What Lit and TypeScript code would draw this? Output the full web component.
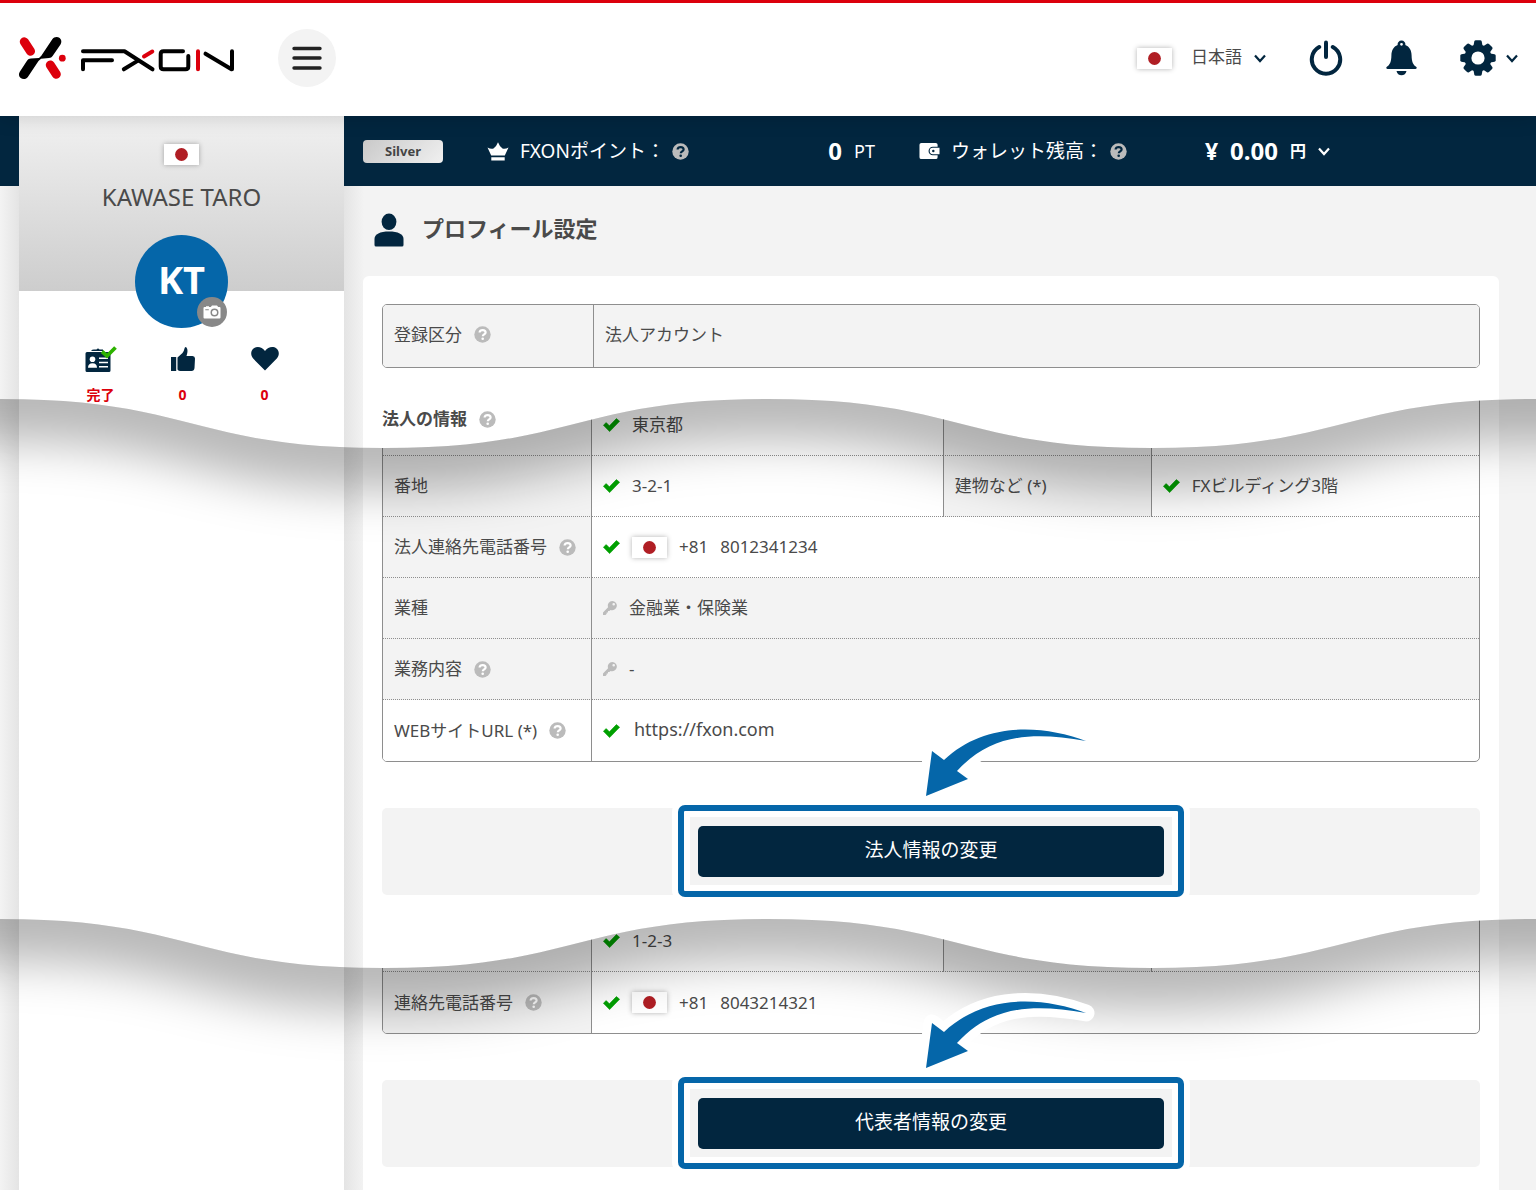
import { LitElement, html, css, svg, unsafeCSS, nothing } from "lit";
import type { TemplateResult } from "lit";
import { customElement } from "lit/decorators.js";
import { classMap } from "lit/directives/class-map.js";

/* Height of the torn edge between two sheets. */
const TEAR = 49;

/* Points of the torn edge: two full swings over the sheet's width. */
function tearPolygon(): string {
  const points: string[] = [];
  const steps = 24;
  for (let swing = 0; swing < 4; swing++) {
    for (let i = 0; i < steps; i++) {
      const t = i / steps;
      const u = 1 - t;
      const x = 1.5 * u * u * t + 1.5 * u * t * t + t * t * t;
      const rise = 3 * u * t * t + t * t * t;
      const y = swing % 2 === 0 ? rise : 1 - rise;
      points.push(`${((swing + x) * 25).toFixed(2)}% ${(y * TEAR).toFixed(1)}px`);
    }
  }
  points.push("100% 0px", "100% 100%", "0% 100%");
  return `polygon(${points.join(",")})`;
}

interface Field {
  label: string;
  value: TemplateResult;
  help?: boolean;
  locked?: boolean;
  plain?: boolean;
  mark?: "check" | "key";
}

const helpIcon = html`<svg class="help" viewBox="0 0 17 17" width="17" height="17" aria-hidden="true">
  <circle cx="8.5" cy="8.5" r="8.2" fill="currentColor" />
  <path d="M5.600 6.600C5.600 4.900 6.900 4.100 8.600 4.100s3 .9 3 2.400c0 1.900-2.800 2-2.800 3.800" fill="none" stroke="var(--help-ink, #fff)" stroke-width="2.200" />
  <circle cx="8.700" cy="12.700" r="1.300" fill="var(--help-ink, #fff)" />
</svg>`;

const checkIcon = html`<svg class="mark" viewBox="0 0 17 14" width="17" height="14" aria-hidden="true">
  <path d="M0.4 7.2 3.2 4.6 6.4 7.8 13.4 0.6 16.6 3.2 6.6 13.6Z" fill="#00a000" stroke="#00a000" stroke-width="0.6" stroke-linejoin="round" />
</svg>`;

const keyIcon = html`<svg class="mark" viewBox="0 0 14 14" width="14" height="14" aria-hidden="true">
  <path fill-rule="evenodd" d="M9.3 0a4.6 4.6 0 1 1-1.7 8.9L6.4 10.100H5v1.300H3.700v1.300L2.500 13.900H0v-2.500L5.100 6.200A4.600 4.600 0 0 1 9.300 0ZM10.700 2a1.300 1.300 0 1 0 0 2.600 1.300 1.300 0 0 0 0-2.600Z" fill="#bbb" />
</svg>`;

const chevron = html`<svg class="chevron" viewBox="0 0 12 9" width="12" height="9" aria-hidden="true">
  <path d="M1 1.500 6 7 11 1.500" fill="none" stroke="currentColor" stroke-width="2.200" />
</svg>`;

const flag = html`<svg class="flag" viewBox="0 0 35 21" width="35" height="21" role="img" aria-label="日本">
  <rect width="35" height="21" fill="#fff" />
  <circle cx="17.500" cy="10.500" r="6.400" fill="#b01e24" />
</svg>`;

const logo = html`<svg viewBox="18 36 219 44" width="219" height="44" aria-hidden="true">
  <g fill="none" stroke="#dc000c" stroke-linecap="round" stroke-width="9">
    <path d="M24.300 41.800 30.500 51.300" />
    <path d="M50.300 65 56.300 74.300" />
  </g>
  <circle cx="62.300" cy="58.200" r="3.400" fill="#dc000c" />
  <path d="M52.300 39.200C54 36.600 57.500 36.200 59.700 38c2 1.600 2.100 4.400.8 6.400L52.600 56c-.8 1.300-2 1.900-3.600 2L41 58.700 38.500 61 28 76.800c-1.700 2.500-5 3-7.300 1.200-2-1.600-2.300-4.200-.9-6.300L27 60.800c1-1.500 2.300-2.300 4-2.300l8-.6 2.300-2.100Z" fill="#000" />
  <g fill="none" stroke="#000" stroke-width="4" stroke-linecap="round" stroke-linejoin="round">
    <path d="M83 51.300H124.500L152.500 69.300" />
    <path d="M83 69.300V60.300H112" />
    <path d="M123.800 69.300 138 60.600" />
    <path d="M183 51.300H163.500Q160.700 51.300 160.700 54V66.500Q160.700 69.300 163.500 69.300H185.500Q188.300 69.300 188.300 66.500V56" />
    <path d="M205.500 53.700 231.500 69.300H232V51.300" />
  </g>
  <path d="M144 56.500 152.300 51.500M198 51.300V69.300" stroke="#dc000c" stroke-width="4" stroke-linecap="round" />
</svg>`;

function gear() {
  const teeth = Array.from({ length: 8 }, (_, i) => i * 45);
  return html`<svg viewBox="0 0 36 36" width="36" height="36" aria-hidden="true">
    <defs>
      <mask id="gear-hole">
        <rect width="36" height="36" fill="#fff" />
        <circle cx="18" cy="18" r="6.600" fill="#000" />
      </mask>
    </defs>
    <g fill="currentColor" mask="url(#gear-hole)">
      <circle cx="18" cy="18" r="13.600" />
      ${teeth.map(
        (a) => svg`<path d="M13.200 7 14.300 1.500Q14.600.3 15.800.3H20.200Q21.400.3 21.700 1.500L22.800 7Z" transform="rotate(${a} 18 18)" />`
      )}
    </g>
  </svg>`;
}

function arrow() {
  const d = "M171 26C128 10 70 6 29 45L17 36 11 81 53 64 42 56C75 20 115 16 171 26Z";
  return html`<svg class="arrow" viewBox="0 0 184 92" width="184" height="92" aria-hidden="true">
    <path d=${d} fill="#fff" stroke="#fff" stroke-width="17" stroke-linejoin="round" />
    <path d=${d} fill="#0566a9" />
  </svg>`;
}

const tearShadow = html`<svg class="tear-shadow" viewBox="0 0 1536 49" preserveAspectRatio="none" aria-hidden="true">
  <path d="M-384-150V49C-192 49-192 0 0 0S192 49 384 49 576 0 768 0 960 49 1152 49 1344 0 1536 0 1728 49 1920 49V-150Z" />
</svg>`;

@customElement("app-root")
export class AppRoot extends LitElement {
  static styles = css`
    :host {
      --navy: #02263f;
      --blue: #0566a9;
      --grey: #f3f3f3;
      --line: #8e8e8e;
      --red: #dc000c;
      display: block;
      background: #fff;
      color: #4a4a4a;
      font: 17px/24px "Noto Sans", "Noto Sans CJK JP", sans-serif;
    }
    * { box-sizing: border-box; }
    svg { display: block; flex: none; }
    button, select {
      font: inherit;
      color: inherit;
      background: none;
      border: 0;
      padding: 0;
      margin: 0;
      cursor: pointer;
    }

    .header {
      position: relative;
      z-index: 2;
      display: flex;
      align-items: center;
      height: 116px;
      padding: 0 18px 3px;
      border-top: 3px solid var(--red);
      background: #fff;
      box-shadow: 0 0 20px rgba(0, 0, 0, 0.18);
    }
    .menu {
      display: grid;
      place-items: center;
      width: 58px;
      height: 58px;
      margin-left: 41px;
      border-radius: 50%;
      background: var(--grey);
    }
    .tools {
      display: flex;
      align-items: center;
      gap: 43px;
      margin-left: auto;
      color: var(--navy);
    }
    .language, .settings { display: flex; align-items: center; }
    .language { gap: 12px; }
    .language .flag { margin-right: 7px; }
    .language select { appearance: none; color: #4a4a4a; padding-bottom: 2px; }
    .settings { gap: 10px; }
    .flag { box-shadow: 0 0 5px rgba(0, 0, 0, 0.3); }

    .sheet {
      position: relative;
      overflow: hidden;
      display: grid;
      grid-template-columns: 19px 325px 19px minmax(0, 1fr) 37px;
      background:
        linear-gradient(90deg, #f3f3f3, #e4e4e4) 0 0 / 19px 100% no-repeat,
        linear-gradient(90deg, #e4e4e4, #f3f3f3) 344px 0 / 20px 100% no-repeat,
        var(--grey);
    }
    .sheet.first { grid-template-rows: 70px auto; overflow: visible; }
    .sheet.torn {
      margin-top: -49px;
      clip-path: ${unsafeCSS(tearPolygon())};
    }
    .tear-shadow {
      position: absolute;
      left: 0;
      top: 42px;
      width: 100%;
      height: 49px;
      overflow: visible;
      pointer-events: none;
      fill: rgba(0, 0, 0, 0.28);
      filter: blur(24px);
    }

    .band {
      grid-area: 1 / 1 / 2 / -1;
      display: flex;
      align-items: center;
      gap: 44px;
      padding-left: 363px;
      background: var(--navy);
      color: #fff;
      font-size: 19px;
      --help-ink: var(--navy);
    }
    .rank {
      width: 80px;
      height: 23px;
      border-radius: 4px;
      background: linear-gradient(135deg, #c9c9c9, #f0f0f0);
      color: #444;
      font-size: 13px;
      font-weight: 700;
      line-height: 23px;
      text-align: center;
    }
    .meter, .caption, .amount { display: flex; align-items: center; }
    .meter { justify-content: space-between; }
    .points { width: 388px; }
    .wallet { width: 411px; }
    .caption .icon { margin-right: 11px; }
    .caption .help { margin-left: 7px; }
    .amount { gap: 12px; }
    .amount b { font-size: 24px; }
    .amount .yen { font-size: 23px; }
    .amount .unit { font-size: 18px; }
    .currency { display: flex; align-items: center; gap: 12px; font-size: 16px; font-weight: 700; }
    .help { color: #bbb; }

    .side { grid-column: 2; background: #fff; }
    .first .side { grid-row: 1 / 3; }
    .profile {
      display: flex;
      flex-direction: column;
      align-items: center;
      padding-top: 28px;
      background: linear-gradient(#f1f1f1, #cdcdcd);
    }
    .name { margin: 17px 0 23px; font-size: 24px; line-height: 30px; font-weight: 400; }
    .avatar {
      position: relative;
      width: 93px;
      height: 93px;
      margin-bottom: -37px;
      border-radius: 50%;
      background: var(--blue);
      color: #fff;
      font-family: "Open Sans", "Noto Sans", sans-serif;
      font-size: 38px;
      font-weight: 700;
      line-height: 88px;
      text-align: center;
    }
    .camera {
      position: absolute;
      right: 1px;
      bottom: 1px;
      display: grid;
      place-items: center;
      width: 30px;
      height: 30px;
      border-radius: 50%;
      background: #888;
    }
    .stats {
      display: grid;
      grid-template-columns: repeat(3, 82px);
      justify-content: center;
      margin: 0;
      padding: 54px 0 0 2px;
      list-style: none;
    }
    .stats li {
      display: flex;
      flex-direction: column;
      align-items: center;
      gap: 12px;
      color: var(--red);
      font-size: 14px;
      font-weight: 700;
      line-height: 20px;
    }

    .main { grid-column: 4; }
    .title {
      display: flex;
      align-items: center;
      gap: 18px;
      height: 90px;
      margin: 0;
      padding: 0 0 6px 11px;
      font-size: 22px;
      line-height: 32px;
    }
    .title svg { margin-top: 4px; }
    .panel { padding: 0 19px; background: #fff; }
    .first .panel { padding-top: 28px; border-radius: 6px 6px 0 0; }
    .second .panel { margin-top: -5px; padding-bottom: 73px; }
    .third .panel { margin-top: -9px; padding-bottom: 24px; }
    .subtitle {
      display: flex;
      align-items: center;
      gap: 12px;
      margin: 39px 0 0;
      padding-bottom: 17px;
      font-size: 17px;
      line-height: 24px;
    }

    .fields {
      width: 100%;
      table-layout: fixed;
      border: 1px solid var(--line);
      border-radius: 5px;
      border-spacing: 0;
      border-collapse: separate;
      overflow: hidden;
    }
    .fields .c-label { width: 209px; }
    .fields .c-value { width: 32%; }
    .first .fields .c-label { width: 211px; }
    .fields th, .fields td {
      height: 61px;
      padding: 0 11px;
      text-align: left;
      font-weight: 400;
      vertical-align: middle;
    }
    .fields th { background: var(--grey); border-right: 1px solid var(--line); }
    .fields td + th { border-left: 1px solid var(--line); }
    .fields tr:not(:last-child) > * { border-bottom: 1px dotted var(--line); }
    .fields .locked { background: var(--grey); }
    .fields .plain { background: #fff; }
    .first .fields th, .first .fields td { height: 62px; padding-bottom: 3px; }
    .cell { display: flex; align-items: center; gap: 12px; }
    .phone { display: flex; align-items: center; gap: 12px; }
    .url { padding: 0 0 4px 2px; font-size: 18px; }

    .action {
      position: relative;
      display: flex;
      justify-content: center;
      margin-top: 46px;
      padding: 18px;
      border-radius: 5px;
      background: var(--grey);
    }
    .highlight { position: relative; width: min(466px, 100%); }
    .highlight::before {
      content: "";
      position: absolute;
      inset: -21px -20px -20px;
      border: 6px solid var(--blue);
      border-radius: 7px;
      box-shadow: 0 0 0 6px #fff, inset 0 0 0 6px #fff;
    }
    .submit {
      position: relative;
      width: 100%;
      height: 51px;
      padding-bottom: 4px;
      border-radius: 5px;
      background: var(--navy);
      color: #fff;
      font-size: 19px;
    }
    .arrow { position: absolute; top: -93px; left: calc(50% - 16px); }
    .overlay { position: relative; z-index: 1; }
  `;

  private label(f: Field) {
    return html`<span class="cell">${f.label}${f.help ? helpIcon : nothing}</span>`;
  }

  private fieldRow(fields: Field[]) {
    const span = fields.length === 1 ? 3 : 1;
    return html`<tr>
      ${fields.map(
        (f) => html`
          <th scope="row" class=${classMap({ plain: !!f.plain })}>${this.label(f)}</th>
          <td colspan=${span} class=${classMap({ locked: !!f.locked })}>
            <span class="cell">${f.mark === "check" ? checkIcon : f.mark === "key" ? keyIcon : nothing}${f.value}</span>
          </td>
        `
      )}
    </tr>`;
  }

  private fieldTable(rows: Field[][]) {
    return html`<table class="fields">
      <colgroup>
        <col class="c-label" /><col class="c-value" /><col class="c-label" /><col />
      </colgroup>
      <tbody>${rows.map((r) => this.fieldRow(r))}</tbody>
    </table>`;
  }

  private phone(number: string) {
    return html`<span class="phone">${flag}<span>+81</span><span>${number}</span></span>`;
  }

  private action(text: string) {
    return html`<div class="action">
      <div class="highlight"><button class="submit" type="button">${text}</button></div>
      ${arrow()}
    </div>`;
  }

  private header() {
    return html`<header class="header">
      <a href="#" aria-label="FXON">${logo}</a>
      <button class="menu" type="button" aria-label="メニュー">
        <svg viewBox="0 0 30 24" width="30" height="24" aria-hidden="true">
          <path d="M2 2.500H28M2 12H28M2 22H28" stroke="#222" stroke-width="3.400" stroke-linecap="round" />
        </svg>
      </button>
      <div class="tools">
        <div class="language">
          ${flag}
          <select aria-label="言語"><option>日本語</option></select>
          ${chevron}
        </div>
        <button type="button" aria-label="ログアウト">
          <svg viewBox="0 0 34 36" width="34" height="36" aria-hidden="true">
            <g fill="none" stroke="currentColor" stroke-width="4" stroke-linecap="round">
              <path d="M17 2.500V17" />
              <path d="M10.200 7A14.200 14.200 0 1 0 23.800 7" />
            </g>
          </svg>
        </button>
        <button type="button" aria-label="お知らせ">
          <svg viewBox="0 0 31 36" width="31" height="36" aria-hidden="true">
            <path fill-rule="evenodd" d="M15.500.5a3.800 3.800 0 0 1 3.800 4.600C23.500 6.700 25.500 10.500 25.600 15.500c.1 6.500 1.700 9.500 4.500 11.200 1 .7.800 2.300-.6 2.300H1.500C.1 29-.1 27.400.9 26.700 3.700 25 5.300 22 5.400 15.500c.1-5 2.100-8.800 6.300-10.400A3.800 3.800 0 0 1 15.500.5ZM15.500 2.900a1.400 1.400 0 1 0 0 2.800 1.400 1.400 0 0 0 0-2.800Z" fill="currentColor" />
            <path d="M10.500 31H20.500C20 33.800 18 35.300 15.500 35.300S11 33.800 10.500 31Z" fill="currentColor" />
          </svg>
        </button>
        <button class="settings" type="button" aria-label="設定">${gear()}${chevron}</button>
      </div>
    </header>`;
  }

  private band() {
    return html`<div class="band">
      <span class="rank">Silver</span>
      <div class="meter points">
        <span class="caption">
          <svg class="icon" viewBox="0 0 22 19" width="22" height="19" aria-hidden="true">
            <path d="M4.200 13.500.5 5.500Q3.500 7.300 6.500 6.600 9.300 4.800 11 .3 12.700 4.800 15.500 6.600 18.500 7.300 21.500 5.500L17.800 13.500ZM4.300 15.200H17.700V18.500H4.300Z" fill="#fff" />
          </svg>
          FXONポイント：${helpIcon}
        </span>
        <span class="amount"><b>0</b><span class="unit">PT</span></span>
      </div>
      <div class="meter wallet">
        <span class="caption">
          <svg class="icon" viewBox="0 0 22 18" width="21" height="18" aria-hidden="true">
            <path d="M2.500.5H17.500Q19.500.5 19.500 2.500V4.500H14.500a4.500 4.500 0 0 0 0 9H19.500V15.500Q19.500 17.500 17.500 17.500H2.500Q.5 17.500.5 15.500V2.500Q.5.500 2.500.500Z" fill="#fff" />
            <path fill-rule="evenodd" d="M14.500 5.700H21.500V12.300H14.500a3.300 3.300 0 0 1 0-6.600ZM15 7.700a1.300 1.300 0 1 0 0 2.600 1.300 1.300 0 0 0 0-2.600Z" fill="#fff" />
          </svg>
          ウォレット残高：${helpIcon}
        </span>
        <span class="amount">
          <b class="yen">¥</b><b>0.00</b>
          <button class="currency" type="button">円${chevron}</button>
        </span>
      </div>
    </div>`;
  }

  private sidebar() {
    return html`<aside class="side">
      <div class="profile">
        ${flag}
        <p class="name">KAWASE TARO</p>
        <div class="avatar">
          KT
          <button class="camera" type="button" aria-label="写真を変更">
            <svg viewBox="0 0 18 14" width="18" height="14" aria-hidden="true">
              <path fill-rule="evenodd" d="M1.500 2H3V1.200H6V2H7.800L9 .5H14L15.200 2H16.500Q17.500 2 17.500 3V12.500Q17.500 13.500 16.500 13.500H1.500Q.5 13.500.5 12.500V3Q.5 2 1.500 2ZM11.500 3.500a4 4 0 1 0 0 8 4 4 0 0 0 0-8ZM11.500 5a2.500 2.500 0 1 1 0 5 2.500 2.500 0 0 1 0-5ZM2.300 4.300V5.300H5.800V4.300Z" fill="#fff" />
            </svg>
          </button>
        </div>
      </div>
      <ul class="stats">
        <li>
          <svg viewBox="0 0 32 28" width="32" height="28" aria-hidden="true">
            <path d="M2 7H24Q25.500 7 25.500 8.500V25.500Q25.500 27 24 27H2Q.5 27 .5 25.500V8.500Q.5 7 2 7ZM6 6Q7 4.600 9 4.600H11.500Q13 2.600 14.500 4.600H18V6Z" fill="#02263f" />
            <circle cx="7.500" cy="14.300" r="2.800" fill="#fff" />
            <path d="M3 22.800Q3 18.300 7.500 18.300T12 22.800Z" fill="#fff" />
            <path d="M14 13.300H23M14 17.500H23M14 21.700H23" stroke="#fff" stroke-width="1.600" />
            <path d="M17 6.500 22 11 30.500 2.500" fill="none" stroke="#2db200" stroke-width="3.800" />
          </svg>
          完了
        </li>
        <li>
          <svg viewBox="0 0 26 28" width="26" height="28" aria-hidden="true">
            <path d="M1 12H6.200V26H1ZM7.500 12.500 12.500 8Q14 6 14.500 3.500T16.500 2.500Q18.500 5 16.500 11H22.500Q25 11.200 25 13.500L24.500 23Q24.200 26 21.500 26H10.500Q8.500 26 7.500 24.500Z" fill="#02263f" />
          </svg>
          0
        </li>
        <li>
          <svg viewBox="0 0 28 28" width="28" height="28" aria-hidden="true">
            <path d="M14 25.500 2.200 13.600C-.7 10.500-.3 5.800 2.500 3.600 6 .9 11 2 14 6 17 2 22 .9 25.500 3.600 28.300 5.800 28.700 10.500 25.800 13.600Z" fill="#02263f" />
          </svg>
          0
        </li>
      </ul>
    </aside>`;
  }

  render() {
    const text = (s: string) => html`<span>${s}</span>`;
    return html`
      ${this.header()}
      <section class="sheet first">
        ${this.band()} ${this.sidebar()}
        <div class="main">
          <h1 class="title">
            <svg viewBox="0 0 30 34" width="30" height="34" aria-hidden="true">
              <ellipse cx="15" cy="8.800" rx="7.400" ry="8.300" fill="#02263f" />
              <path d="M.5 26C.5 21 6 18.500 15 18.500S29.500 21 29.500 26V32Q29.500 33.500 28 33.500H2Q.5 33.500.5 32Z" fill="#02263f" />
            </svg>
            プロフィール設定
          </h1>
          <div class="panel">
            ${this.fieldTable([[{ label: "登録区分", help: true, locked: true, value: text("法人アカウント") }]])}
            <h2 class="subtitle">法人の情報${helpIcon}</h2>
          </div>
        </div>
      </section>

      <section class="sheet torn second">
        <div class="side"></div>
        <div class="main panel">
          ${this.fieldTable([
            [
              { label: "", mark: "check", value: text("東京都") },
              { label: "", value: text("") },
            ],
            [
              { label: "番地", mark: "check", value: text("3-2-1") },
              { label: "建物など (*)", mark: "check", value: text("FXビルディング3階") },
            ],
            [{ label: "法人連絡先電話番号", help: true, mark: "check", value: this.phone("8012341234") }],
            [{ label: "業種", locked: true, mark: "key", value: text("金融業・保険業") }],
            [{ label: "業務内容", help: true, locked: true, mark: "key", value: text("-") }],
            [
              {
                label: "WEBサイトURL (*)",
                help: true,
                plain: true,
                mark: "check",
                value: html`<span class="url">https://fxon.com</span>`,
              },
            ],
          ])}
          ${this.action("法人情報の変更")}
        </div>
        ${tearShadow}
      </section>

      <section class="sheet torn third">
        <div class="side"></div>
        <div class="main panel">
          <div>
            ${this.fieldTable([
              [
                { label: "", mark: "check", value: text("1-2-3") },
                { label: "", value: text("") },
              ],
              [{ label: "連絡先電話番号", help: true, mark: "check", value: this.phone("8043214321") }],
            ])}
          </div>
          <div class="overlay">${this.action("代表者情報の変更")}</div>
        </div>
        ${tearShadow}
      </section>
    `;
  }
}
